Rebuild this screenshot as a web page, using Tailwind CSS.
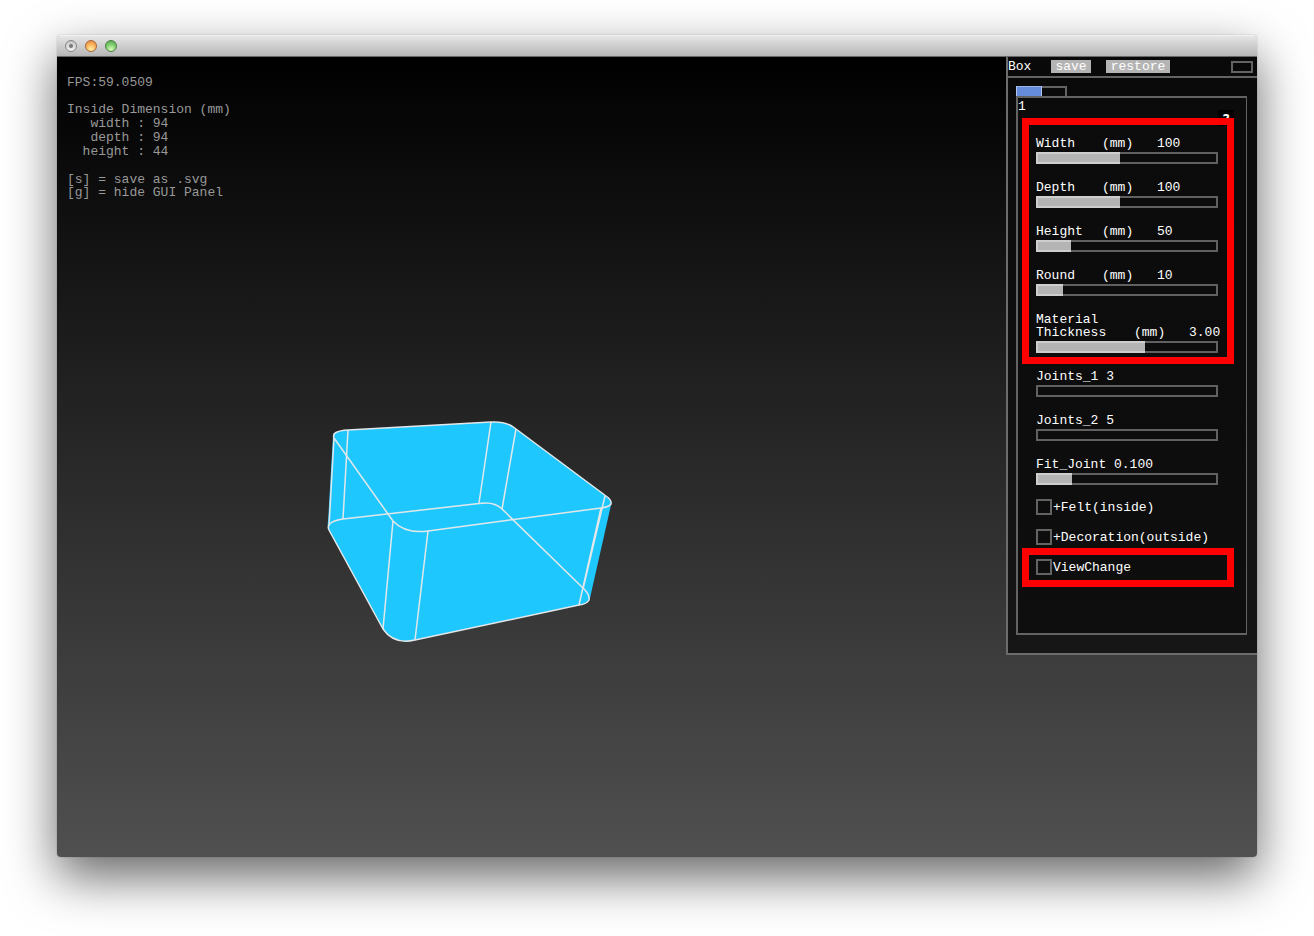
<!DOCTYPE html>
<html lang="en">
<head>
<meta charset="utf-8">
<title>Box</title>
<script src="https://cdn.jsdelivr.net/npm/@tailwindcss/browser@4"></script>
</head>
<body class="bg-white">
<div class="flex min-h-screen flex-col px-[57px] pt-[35px] pb-[79px] font-['Liberation_Mono',monospace] text-[13px] leading-[13px]">
  <main class="flex grow flex-col overflow-hidden rounded-[4px] shadow-[0_0_1px_rgba(0,0,0,0.6),0_20px_50px_rgba(0,0,0,0.6)]">
    <header class="flex h-[22px] items-center gap-2 border-t border-b border-t-[#f2f2f2] border-b-[#686868] bg-linear-to-b from-[#e6e6e6] to-[#b6b6b6] pl-2">
      <button aria-label="Close" class="grid size-3 place-items-center rounded-full border border-[#858585] bg-linear-to-b from-[#c4c4c4] to-[#f2f2f2]"><span class="size-1 rounded-full bg-[#777777]"></span></button>
      <button aria-label="Minimize" class="size-3 rounded-full border border-[#a8663a] bg-[radial-gradient(circle_at_50%_85%,#fff3a8,#f9b25a_55%,#e2813a)]"></button>
      <button aria-label="Zoom" class="size-3 rounded-full border border-[#4d7f45] bg-[radial-gradient(circle_at_50%_85%,#d8ffb8,#7ccb6c_55%,#4f9f4a)]"></button>
    </header>

    <div class="relative flex grow items-start justify-between bg-linear-to-b/srgb from-black to-[#505050]">
      <svg class="absolute top-[353px] left-[263px] h-[240px] w-[300px]" viewBox="320 410 300 240" fill="none" role="img" aria-label="Box preview">
        <path fill="#1fc7ff" d="M333 436Q332 431 348 430L491 422Q507 421 516 429L606 496Q612 500 611 505L590 598Q589 603 579 605L415 640Q394 645 383 629L329 530Q327 526 328 522Z"/>
        <g stroke="#e2e8ea" stroke-width="1.5" stroke-linejoin="round">
          <path d="M348 430L491 422Q507 421 516 429L606 496Q612 500 611 504Q609 507 601 508L428 531Q405 534 393 521L334 438Q331 431 348 430Z"/>
          <path d="M343 519L479 503.500Q494 501 502 509L584 589Q590 595 589 600Q587 604 579 605L415 640Q394 645 383 629L329 530Q325 522 343 519Z"/>
          <path d="M348 430L343 519M334 438L329 526M491 422L479 503M516 429L502 509M605 496L583 589M601 508L579 605M393 521L383 629M428 531L415 640"/>
        </g>
      </svg>

      <section class="flex flex-col gap-[14px] pt-[19px] pl-[10px] whitespace-pre text-[#999999]">
        <p>FPS:59.0509</p>
        <div class="leading-[14px]"><p>Inside Dimension (mm)</p><p>   width : 94</p><p>   depth : 94</p><p>  height : 44</p></div>
        <div><p>[s] = save as .svg</p><p>[g] = hide GUI Panel</p></div>
      </section>

      <aside class="relative w-[251px] border-b-2 border-l-2 border-[#6c6c6c] bg-linear-to-b/srgb from-[#090909] to-[#161616] pb-[18px] text-white">
        <div class="flex h-[21px] items-center border-b-2 border-[#636363] pr-1">
          <h1 class="w-[43px]">Box</h1>
          <button class="h-[13px] w-10 bg-[#b4b4b4]">save</button>
          <button class="ml-[15px] h-[13px] w-16 bg-[#b4b4b4]">restore</button>
          <button aria-label="Collapse panel" class="ml-auto h-3 w-[22px] border-2 border-[#636363]"></button>
        </div>
        <div class="pt-2 pr-[10px] pl-2">
          <div class="flex h-[11px] w-[51px]">
            <button aria-label="Page 1" class="w-[26px] border border-r-[#b5c6ee] border-l-[#b5c6ee] border-y-[#9cb4e6] bg-[#658cda]"></button>
            <button aria-label="Page 2" class="grow border-t-2 border-r-2 border-[#636363]"></button>
          </div>
          <form class="relative -mt-px flex flex-col border-2 border-r border-[#636363] bg-linear-to-b from-[#0b0b0b] to-[#0e0e0e] pt-5 pb-[46px] pl-1">
            <span class="absolute top-0.5 left-0">1</span>
            <span class="absolute top-3 right-3 h-4 w-4 bg-black text-center font-['DejaVu_Sans_Mono',monospace] text-[14px] leading-[18px] font-bold">?</span>

            <div class="relative flex w-[212px] flex-col gap-[17px] border-[7px] border-[#ff0000] pt-3 pb-1 pl-[7px]">
              <div class="flex flex-col gap-0.5">
                <label for="width" class="flex"><span class="w-[66px]">Width</span><span class="w-[55px]">(mm)</span>100</label>
                <input id="width" type="range" min="0" max="1000" value="460" class="h-3 w-[182px] appearance-none border-2 border-white/35 bg-origin-border [&::-webkit-slider-thumb]:appearance-none" style="background-image:linear-gradient(to right,#b4b4b4 46%,transparent 46%)">
              </div>
              <div class="flex flex-col gap-0.5">
                <label for="depth" class="flex"><span class="w-[66px]">Depth</span><span class="w-[55px]">(mm)</span>100</label>
                <input id="depth" type="range" min="0" max="1000" value="460" class="h-3 w-[182px] appearance-none border-2 border-white/35 bg-origin-border [&::-webkit-slider-thumb]:appearance-none" style="background-image:linear-gradient(to right,#b4b4b4 46%,transparent 46%)">
              </div>
              <div class="flex flex-col gap-0.5">
                <label for="height" class="flex"><span class="w-[66px]">Height</span><span class="w-[55px]">(mm)</span>50</label>
                <input id="height" type="range" min="0" max="1000" value="190" class="h-3 w-[182px] appearance-none border-2 border-white/35 bg-origin-border [&::-webkit-slider-thumb]:appearance-none" style="background-image:linear-gradient(to right,#b4b4b4 19%,transparent 19%)">
              </div>
              <div class="flex flex-col gap-0.5">
                <label for="round" class="flex"><span class="w-[66px]">Round</span><span class="w-[55px]">(mm)</span>10</label>
                <input id="round" type="range" min="0" max="1000" value="150" class="h-3 w-[182px] appearance-none border-2 border-white/35 bg-origin-border [&::-webkit-slider-thumb]:appearance-none" style="background-image:linear-gradient(to right,#b4b4b4 15%,transparent 15%)">
              </div>
              <div class="flex flex-col gap-0.5">
                <label for="thickness">Material<span class="flex"><span class="w-[98px]">Thickness</span><span class="w-[55px]">(mm)</span>3.00</span></label>
                <input id="thickness" type="range" min="0" max="1000" value="600" class="h-3 w-[182px] appearance-none border-2 border-white/35 bg-origin-border [&::-webkit-slider-thumb]:appearance-none" style="background-image:linear-gradient(to right,#b4b4b4 60%,transparent 60%)">
              </div>
            </div>

            <div class="flex flex-col gap-[17px] pt-1.5 pl-[14px]">
              <div class="flex flex-col gap-0.5">
                <label for="joints1">Joints_1 3</label>
                <input id="joints1" type="range" min="0" max="1000" value="0" class="h-3 w-[182px] appearance-none border-2 border-white/35 [&::-webkit-slider-thumb]:appearance-none">
              </div>
              <div class="flex flex-col gap-0.5">
                <label for="joints2">Joints_2 5</label>
                <input id="joints2" type="range" min="0" max="1000" value="0" class="h-3 w-[182px] appearance-none border-2 border-white/35 [&::-webkit-slider-thumb]:appearance-none">
              </div>
              <div class="flex flex-col gap-0.5">
                <label for="fit">Fit_Joint 0.100</label>
                <input id="fit" type="range" min="0" max="1000" value="200" class="h-3 w-[182px] appearance-none border-2 border-white/35 bg-origin-border [&::-webkit-slider-thumb]:appearance-none" style="background-image:linear-gradient(to right,#b4b4b4 20%,transparent 20%)">
              </div>
            </div>

            <div class="flex flex-col gap-[14px] pt-[14px] pb-[3px] pl-[14px]">
              <label class="flex items-center gap-px"><input type="checkbox" class="size-4 appearance-none border-2 border-[#636363]">+Felt(inside)</label>
              <label class="flex items-center gap-px"><input type="checkbox" class="size-4 appearance-none border-2 border-[#636363]">+Decoration(outside)</label>
            </div>
            <div class="w-[212px] border-[7px] border-[#ff0000] pt-1 pb-[5px] pl-[7px]">
              <label class="flex items-center gap-px"><input type="checkbox" class="size-4 appearance-none border-2 border-[#636363]">ViewChange</label>
            </div>
          </form>
        </div>
      </aside>
    </div>
  </main>
</div>
</body>
</html>
